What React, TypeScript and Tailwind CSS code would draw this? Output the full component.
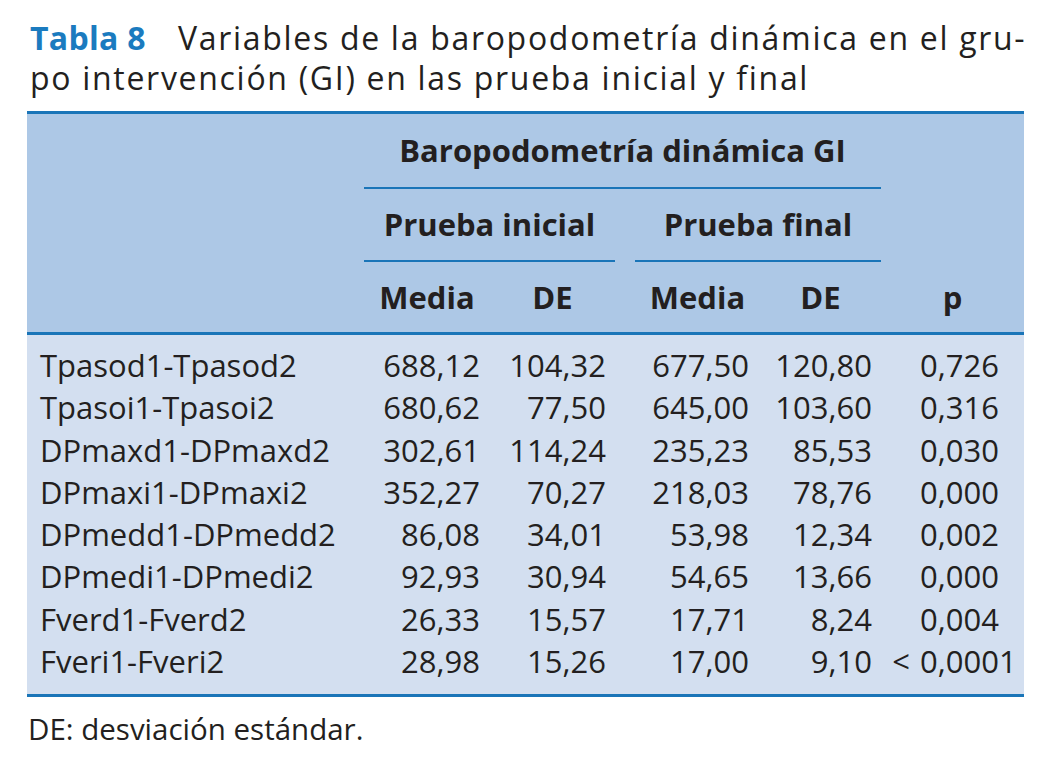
const rows = [
  ["Tpasod1-Tpasod2", "688,12", "104,32", "677,50", "120,80", "", "0,726"],
  ["Tpasoi1-Tpasoi2", "680,62", "77,50", "645,00", "103,60", "", "0,316"],
  ["DPmaxd1-DPmaxd2", "302,61", "114,24", "235,23", "85,53", "", "0,030"],
  ["DPmaxi1-DPmaxi2", "352,27", "70,27", "218,03", "78,76", "", "0,000"],
  ["DPmedd1-DPmedd2", "86,08", "34,01", "53,98", "12,34", "", "0,002"],
  ["DPmedi1-DPmedi2", "92,93", "30,94", "54,65", "13,66", "", "0,000"],
  ["Fverd1-Fverd2", "26,33", "15,57", "17,71", "8,24", "", "0,004"],
  ["Fveri1-Fveri2", "28,98", "15,26", "17,00", "9,10", "<", "0,0001"],
];

export default function App() {
  return (
    <div className="w-[1037px] h-[775px] bg-white text-[#231f20] font-['Open_Sans',sans-serif] pt-[18px]">
      <div className="pl-[30px] text-[32px] tracking-[1.7px] whitespace-nowrap">
        <div className="h-[40px] leading-[40px]">
          <span className="font-bold text-[#1b7bbf] tracking-[0.3px] mr-[32px]">Tabla 8</span>
          Variables de la baropodometría dinámica en el gru-
        </div>
        <div className="h-[40px] leading-[40px]">po intervención (GI) en las prueba inicial y final</div>
      </div>

      <div className="ml-[27px] w-[997px] mt-[13px] border-t-[3px] border-b-[3px] border-[#1a75b8] text-[31px]">
        <div className="bg-[#adc8e6] font-bold border-b-[3px] border-[#1a75b8]">
          <div className="flex h-[75px]">
            <div className="w-[337px]" />
            <div className="w-[517px] flex items-center justify-center border-b-2 border-[#1a75b8]">
              Baropodometría dinámica GI
            </div>
          </div>
          <div className="flex h-[73px]">
            <div className="w-[337px]" />
            <div className="w-[251px] flex items-center justify-center border-b-2 border-[#1a75b8]">
              Prueba inicial
            </div>
            <div className="w-[20px]" />
            <div className="w-[246px] flex items-center justify-center border-b-2 border-[#1a75b8]">
              Prueba final
            </div>
          </div>
          <div className="flex h-[70px] items-center text-center">
            <div className="w-[337px]" />
            <div className="w-[126px]">Media</div>
            <div className="w-[125px]">DE</div>
            <div className="w-[20px]" />
            <div className="w-[125px]">Media</div>
            <div className="w-[121px]">DE</div>
            <div className="w-[143px]">p</div>
          </div>
        </div>

        <div className="bg-[#d3dff0] pt-[9px] pb-[12px]">
          {rows.map((r) => (
            <div key={r[0]} className="flex h-[42.3px] items-center whitespace-nowrap">
              <div className="w-[337px] pl-[13px]">{r[0]}</div>
              <div className="w-[126px] pr-[10px] text-right">{r[1]}</div>
              <div className="w-[125px] pr-[9px] text-right">{r[2]}</div>
              <div className="w-[20px]" />
              <div className="w-[125px] pr-[11px] text-right">{r[3]}</div>
              <div className="w-[121px] pr-[9px] text-right">{r[4]}</div>
              <div className="w-[143px] flex">
                <span className="w-[39px] pr-[10px] text-right">{r[5]}</span>
                <span>{r[6]}</span>
              </div>
            </div>
          ))}
        </div>
      </div>

      <p className="pl-[28px] mt-[12px] text-[29.5px] leading-[40px]">DE: desviación estándar.</p>
    </div>
  );
}
